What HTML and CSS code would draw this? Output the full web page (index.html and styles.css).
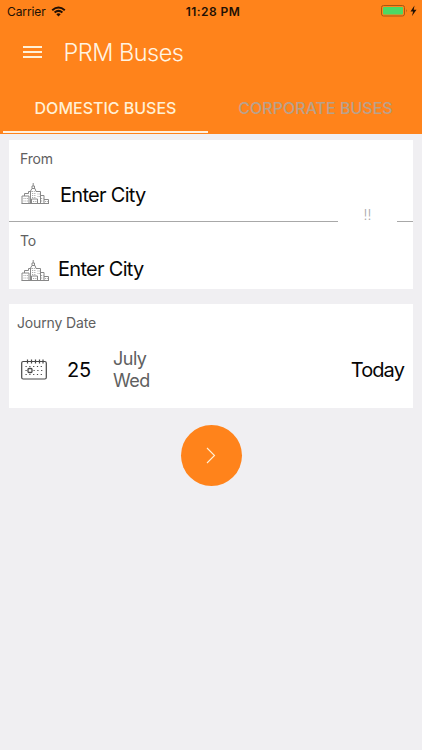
FILE: index.html
```
<!DOCTYPE html>
<html lang="en">
<head>
<meta charset="utf-8">
<title>PRM Buses</title>
<link rel="stylesheet" href="styles.css">
</head>
<body>
<svg class="defs" width="0" height="0" aria-hidden="true">
  <symbol id="city" viewBox="0 0 30 24">
    <g fill="none" stroke="#888" stroke-width="1">
      <path d="M.5 20.500h27.500M1 20.500v-7.500h7v7.500M3.500 13v-2.500h4v-2h3M9.500 20v-12M9.500 8l1.500-2.500h3l1 3M11 5.500v-2.500h2.500v2.500M12.200 3v-3M15 8.500h4.500v12M10.500 20.500v-4.500h6v4.500M19.500 12.500h3.500v8M23 16.500h4.500v4"/>
      <path stroke="#aaa" stroke-dasharray="1 .8" d="M2.500 15.500h5M2.500 18h5M11 8.500h3M11 10.500h4M11 12.500h4M11 14.500h4M16.500 11h2.500M16.500 13.500h2.500M12 18.500h4M20 15.500h3M20 18h3M24 18.500h3"/>
    </g>
  </symbol>
</svg>
<header class="header">
  <div class="status">
    <span class="carrier">Carrier</span>
    <svg class="wifi" width="15" height="11" viewBox="0 0 15 11" fill="none" stroke="#211005" stroke-width="2"><path d="M1.200 4.200q6.300-5.400 12.600 0M3.600 6.600q3.900-3.400 7.800 0"/><path d="M5.300 8.200q2.200-1.700 4.400 0L7.500 10.500z" fill="#211005" stroke="none"/></svg>
    <span class="clock">11:28 PM</span>
    <svg class="battery" width="38" height="12" viewBox="0 0 38 12"><rect x="1.500" y=".5" width="23" height="10.500" rx="2" fill="none" stroke="#a95812"/><rect x="3" y="2" width="20" height="7.500" rx="1" fill="#4cd964"/><path d="M26 4q1.500 1.700 0 3.500z" fill="#a95812"/><path d="M34.500 .5L30.500 6.500h2.600L32 11l4.500-6.300h-2.800z" fill="#211005"/></svg>
  </div>
  <div class="bar">
    <svg class="menu" width="19" height="14" viewBox="0 0 19 14" stroke="#fff1d8" stroke-width="2"><path d="M0 2h19M0 7h19M0 12h19"/></svg>
    <h1 class="title">PRM Buses</h1>
  </div>
  <nav class="tabs">
    <div class="tab active"><span class="domestic">DOMESTIC BUSES</span></div>
    <div class="tab"><span class="corporate">CORPORATE BUSES</span></div>
  </nav>
</header>
<main>
  <section class="card route">
    <div class="place from">
      <div class="label">From</div>
      <div class="field"><svg class="city" width="30" height="24"><use href="#city"/></svg><span class="value">Enter City</span></div>
    </div>
    <div class="divider"><span class="line"></span><span class="swap">!!</span><span class="line short"></span></div>
    <div class="place to">
      <div class="label">To</div>
      <div class="field"><svg class="city" width="30" height="24"><use href="#city"/></svg><span class="value">Enter City</span></div>
    </div>
  </section>
  <section class="card journey">
    <div class="label date-label">Journy Date</div>
    <div class="date">
      <svg width="26" height="21" viewBox="0 0 26 21" fill="none" stroke="#484848"><rect x=".7" y="2.500" width="24.600" height="17.500" rx="1.500" stroke-width="1.200"/><path d="M6.500.5v4M10.500.5v4M14.500.5v4M18.500.5v4M22 .5v4" stroke-width="1.200"/><rect x="7" y="9.500" width="4" height="4" rx="1" stroke-width="1.300"/><path stroke-width="1.200" stroke-dasharray="1.200 2.600" d="M4.500 7.500h18M12.500 11.500h10M4.500 11.500h1.500M4.500 15.500h18"/></svg>
      <span class="day">25</span>
      <span class="month">July<br>Wed</span>
      <span class="today">Today</span>
    </div>
  </section>
  <button class="go" aria-label="Search"><svg width="10" height="17" viewBox="0 0 10 17" fill="none" stroke="#fff1d8" stroke-width="1.100"><path d="M1 1l7.500 7.500L1 16"/></svg></button>
</main>
</body>
</html>
```
FILE: styles.css
```
* { box-sizing: border-box; }
body {
  margin: 0;
  height: 750px;
  background: #f0eff2;
  color: #060606;
  font-family: Inter, "Liberation Sans", sans-serif;
  overflow: hidden;
}
.defs { display: none; }
svg { display: block; flex: none; }
span { white-space: nowrap; }
.header {
  height: 133.500px;
  background: #ff831b;
  display: flex;
  flex-direction: column;
}
.status {
  height: 22px;
  padding: 0 4px 0 7px;
  display: grid;
  grid-template-columns: 44px 1fr auto 1fr;
  align-items: center;
  font-size: 12px;
  color: #211005;
}
.carrier { letter-spacing: -.1px; }
.clock { font-weight: 600; letter-spacing: .45px; margin-left: -43px; }
.battery { justify-self: end; }
.bar {
  height: 61px;
  padding-left: 22.500px;
  display: flex;
  align-items: center;
}
.menu { margin-top: -2px; }
.title {
  margin: 0 0 0 22px;
  font-size: 23.500px;
  font-weight: 300;
  letter-spacing: -.5px;
  color: #fff4e2;
}
.tabs {
  flex: 1;
  display: grid;
  grid-template-columns: 205px 205px;
  padding: 0 3px;
  gap: 3px;
}
.tab {
  height: 49.500px;
  padding-top: 1px;
  display: flex;
  align-items: center;
  justify-content: center;
  font-size: 16px;
  font-weight: 500;
  color: #b9a18c;
}
.active { padding-top: 3px; color: #fff0d5; border-bottom: 2.500px solid #fff0df; }
.corporate { margin-left: 4px; }
.card { background: #fff; margin: 0 9px; }
.route { margin-top: 6.500px; height: 149px; }
.label { font-size: 14px; line-height: 18px; letter-spacing: -.15px; color: #606060; }
.place { padding-left: 11px; }
.from { height: 81px; padding-top: 10px; }
.field { display: flex; align-items: center; }
.from .field { margin-top: 15px; }
.value { font-size: 20px; line-height: 24px; letter-spacing: -.7px; margin-left: 9px; }
.city { margin-left: 1px; }
.divider { display: flex; height: 1px; align-items: center; }
.line { width: 329px; height: 1px; background: #a8a8a8; }
.short { width: 16px; }
.swap {
  width: 59px;
  height: 28px;
  line-height: 14px;
  text-align: center;
  font-size: 14px;
  font-weight: 300;
  color: #aaa;
}
.to { padding-top: 10px; }
.to .field { margin-top: 5px; align-items: flex-start; }
.to .city { margin-top: 5px; }
.to .value { margin: 2px 0 0 7px; }
.journey { margin-top: 15px; height: 104px; padding: 10px 9px 0 8px; }
.date { height: 55px; margin-top: 10px; padding-left: 4px; display: flex; align-items: center; }
.day { font-size: 20px; letter-spacing: -.3px; width: 46px; margin-left: 20px; }
.month { font-size: 18px; line-height: 22px; letter-spacing: -.5px; color: #606060; }
.today { font-size: 20px; letter-spacing: -.9px; margin-left: auto; }
.go {
  display: flex;
  align-items: center;
  justify-content: center;
  width: 61px;
  height: 61px;
  margin: 17px auto 0;
  padding: 0;
  border: 0;
  border-radius: 50%;
  background: #ff831b;
}
```
